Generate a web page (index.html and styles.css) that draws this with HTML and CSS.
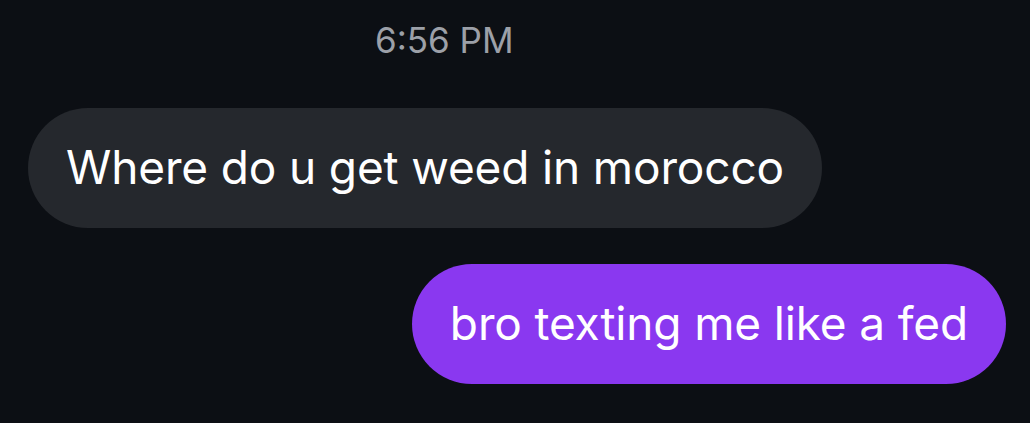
FILE: index.html
```html
<!DOCTYPE html>
<html>
<head>
<meta charset="utf-8">
<link rel="stylesheet" href="styles.css">
</head>
<body>
<div class="chat">
  <div class="time">6:56 PM</div>
  <div class="row row-in"><div class="bubble in">Where do u get weed in morocco</div></div>
  <div class="row row-out"><div class="bubble out">bro texting me like a fed</div></div>
</div>
</body>
</html>
```
FILE: styles.css
```css
html, body {
  margin: 0;
  padding: 0;
  background: #0c0f14;
  height: 100%;
}
.chat {
  display: flex;
  flex-direction: column;
  padding: 18px 24px 0 28px;
  font-family: Inter, "Noto Sans", sans-serif;
}
.time {
  align-self: flex-start;
  margin-left: 347px;
  color: #9ca0a8;
  font-size: 35px;
  line-height: 44px;
  letter-spacing: 0;
}
.row {
  display: flex;
}
.row-in {
  margin-top: 46px;
  justify-content: flex-start;
}
.row-out {
  margin-top: 36px;
  justify-content: flex-end;
}
.bubble {
  height: 120px;
  box-sizing: border-box;
  display: flex;
  align-items: center;
  border-radius: 60px;
  color: #ffffff;
  font-size: 46px;
  letter-spacing: -0.15px;
  white-space: nowrap;
  padding: 0 38px 2px;
}
.in {
  background: #25282d;
}
.out {
  background: #8a38f0;
}
```
